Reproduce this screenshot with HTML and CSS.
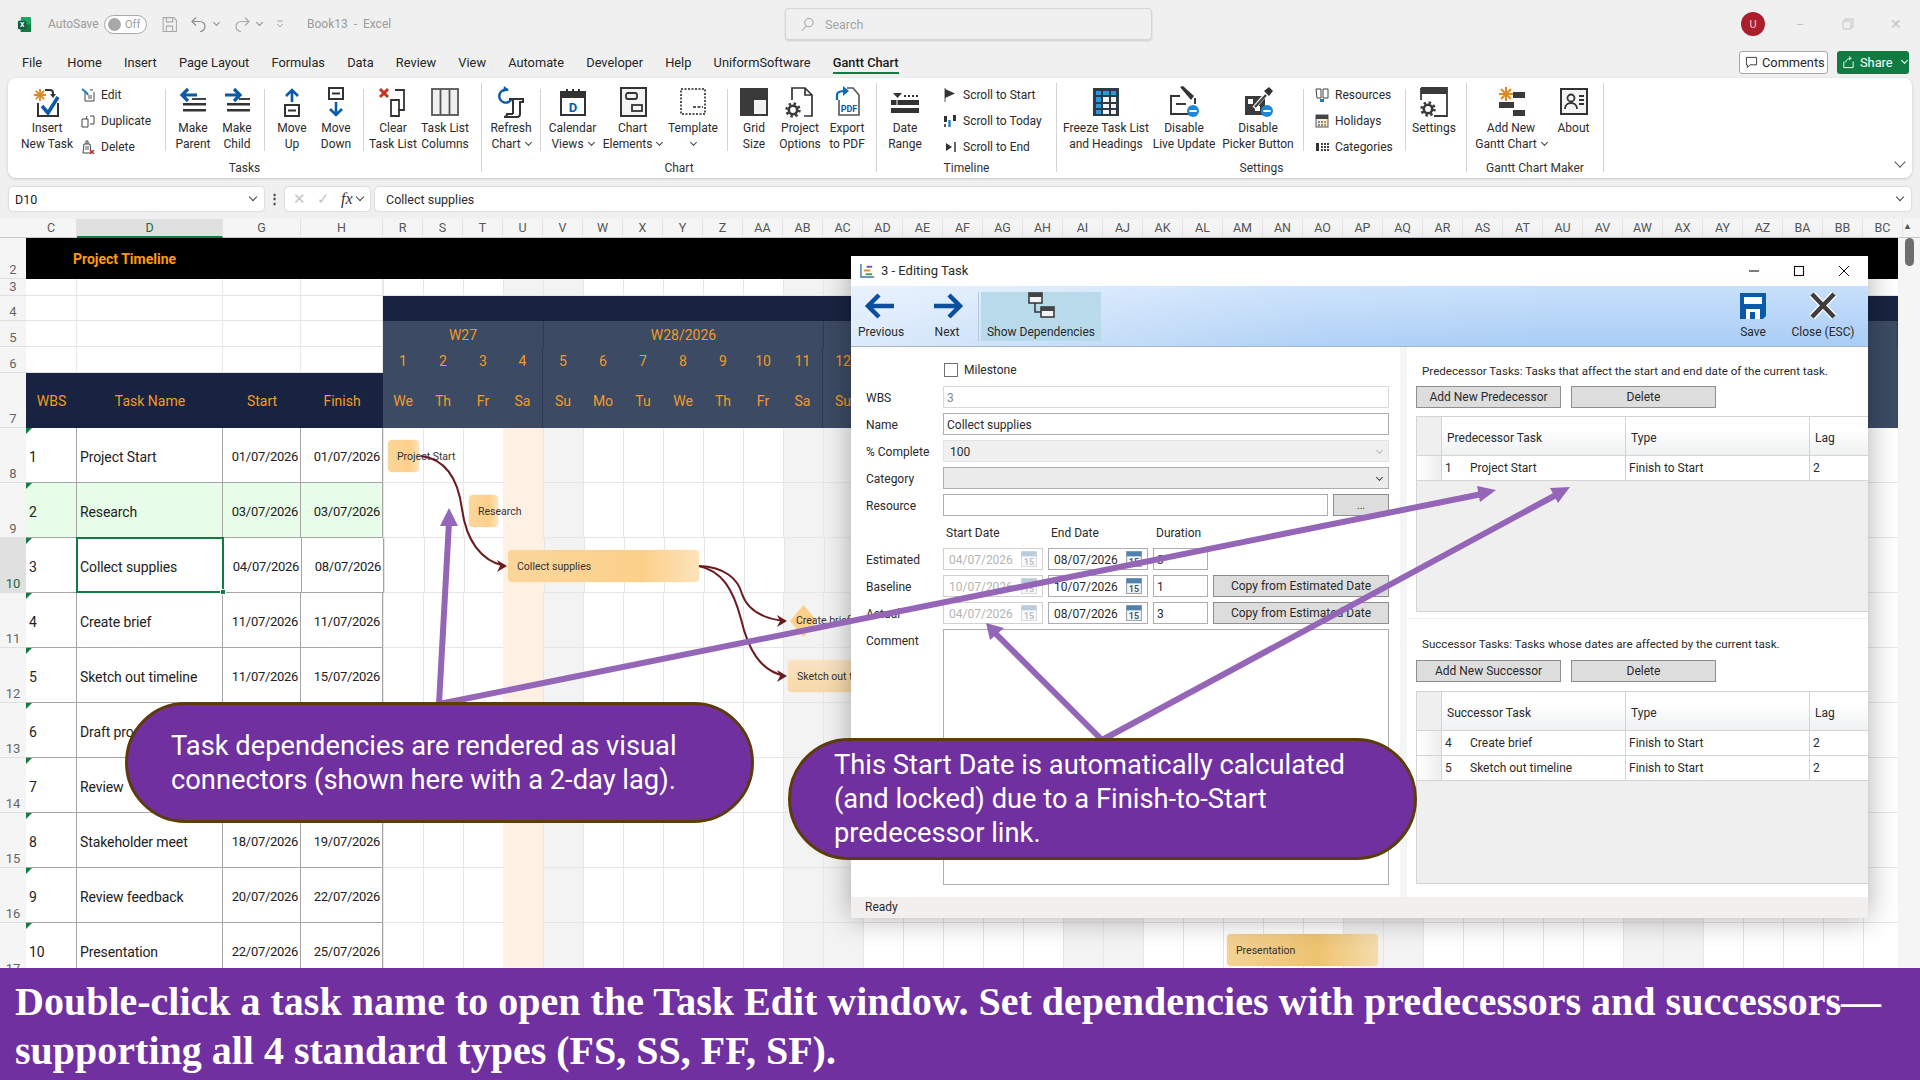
FILE: index.html
```html
<!DOCTYPE html>
<html lang="en">
<head>
<meta charset="utf-8">
<title>Gantt Chart - Editing Task</title>
<link rel="stylesheet" href="styles.css">
</head>
<body>
<svg class="defs" width="0" height="0" aria-hidden="true">
  <defs>
    <g id="gear"><circle cx="8" cy="8" r="4.2" fill="none" stroke="#3a3a3a" stroke-width="2.6"/><circle cx="8" cy="8" r="6.4" fill="none" stroke="#3a3a3a" stroke-width="2.6" stroke-dasharray="2.4 2.6"/></g>
    <g id="cal"><rect x="1.5" y="1.5" width="14" height="14" fill="#f4f6f8" stroke="#9aa3ad"/><rect x="1.5" y="1.5" width="14" height="4.5" fill="#4f81ac"/><text x="8.5" y="14" font-family="Roboto, sans-serif" font-size="8.5" font-weight="700" text-anchor="middle" fill="#4a5a6a">15</text></g>
    <g id="minusdot"><circle cx="0" cy="0" r="6" fill="#1e88d6"/><rect x="-3.6" y="-1" width="7.2" height="2" fill="#fff"/></g>
  </defs>
</svg>
<div class="app">
  <header class="titlebar">
    <div class="qat">
      <svg class="xl" viewBox="0 0 16 18"><rect x="4" y="1" width="11" height="16" rx="1" fill="#21a366"/><rect x="4" y="9" width="11" height="8" fill="#107c41"/><rect x="1" y="5" width="9" height="9" rx="1" fill="#185c37"/><text x="5.5" y="12" font-family="Roboto, sans-serif" font-size="7.5" font-weight="700" text-anchor="middle" fill="#fff">X</text></svg>
      <span class="autosave">AutoSave</span>
      <span class="toggle"><i class="knob"></i><b>Off</b></span>
      <svg class="qi" viewBox="0 0 16 16"><path d="M2 1.5h10l2.5 2.5v10.500h-12.500z M5 1.500v4h6v-4 M5 14.500v-5h6v5" fill="none" stroke="#a8a8a8"/></svg>
      <svg class="qi qi-undo" viewBox="0 0 18 16"><path d="M6 1 2 5l4 4 M2 5h8a5 5 0 0 1 0 10" fill="none" stroke="#8c8c8c" stroke-width="1.200"/></svg>
      <i class="ch ch-q"></i>
      <svg class="qi qi-redo" viewBox="0 0 18 16"><path d="M12 1l4 4-4 4 M16 5H8a5 5 0 0 0 0 10" fill="none" stroke="#a8a8a8" stroke-width="1.200"/></svg>
      <i class="ch ch-q"></i>
      <svg class="qcust" viewBox="0 0 10 10"><path d="M2 2h6M2 5l3 3 3-3" fill="none" stroke="#a8a8a8"/></svg>
      <span class="bookname">Book13 &nbsp;-&nbsp; Excel</span>
    </div>
    <div class="search"><svg class="si" viewBox="0 0 16 16"><circle cx="9.500" cy="6" r="4.500" fill="none" stroke="#9a9a9a"/><path d="M6.500 9.500 2 15" stroke="#9a9a9a" fill="none"/></svg><span>Search</span></div>
    <div class="winctl">
      <span class="avatar">U</span>
      <span class="wc">–</span>
      <svg class="wcs" viewBox="0 0 12 12"><path d="M3 3V1h8v8H9M1 3h8v8H1z" fill="none" stroke="#c4c4c4"/></svg>
      <span class="wc wc-x">✕</span>
    </div>
  </header>

  <nav class="tabs">
    <span class="tab tab-first">File</span><span class="tab">Home</span><span class="tab">Insert</span><span class="tab">Page Layout</span><span class="tab">Formulas</span><span class="tab">Data</span><span class="tab">Review</span><span class="tab">View</span><span class="tab">Automate</span><span class="tab">Developer</span><span class="tab">Help</span><span class="tab">UniformSoftware</span><span class="tab tab-on">Gantt Chart</span>
    <span class="tab-actions">
      <span class="comments"><svg class="ci" viewBox="0 0 14 14"><path d="M1.500 1.500h11v8h-7l-3 3v-3h-1z" fill="none" stroke="#333"/></svg>Comments</span>
      <span class="share"><svg class="ci" viewBox="0 0 14 14"><path d="M2 6v6.500h10V6M4 7c0-3 3-4.500 5-4.500M7.500 0.500 10 2.500 7.500 4.500" fill="none" stroke="#fff"/></svg>Share<i class="ch ch-share"></i></span>
    </span>
  </nav>

  <section class="ribbon">
    <div class="grp g-tasks">
      <div class="rb-row">
        <div class="rb w50"><svg class="ic" viewBox="0 0 32 32"><path d="M9 3v12M3 9h12M4.800 4.800l8.400 8.400M13.200 4.800l-8.400 8.400" stroke="#e08a1e" stroke-width="1.800"/><path d="M14 4h5a3 3 0 0 1 3 3v3" fill="none" stroke="#333" stroke-width="2"/><path d="M19 8l3 4 3-4z" fill="#333"/><path d="M7 17v13h20V17" fill="none" stroke="#333" stroke-width="2"/><path d="M11 20l6 7 10-16" fill="none" stroke="#0a5aa8" stroke-width="3.600"/></svg><span class="lb">Insert<br>New Task</span></div>
        <div class="smcol w93">
          <div class="sm"><svg class="ics" viewBox="0 0 14 14"><path d="M4 3v10h9V4M9 2h3" fill="none" stroke="#444"/><path d="M1 1l5 4M5 4l2 3" stroke="#1c7fc4" stroke-width="2"/><path d="M7 8h4M7 10h4" stroke="#555"/></svg><span>Edit</span></div>
          <div class="sm"><svg class="ics" viewBox="0 0 14 14"><path d="M1 5h6v8H1zM5 5l1-3M10 2h3v8h-3" fill="none" stroke="#444"/><path d="M9 2h1M9 10h1" stroke="#444"/></svg><span>Duplicate</span></div>
          <div class="sm"><svg class="ics" viewBox="0 0 14 14"><path d="M3 4h6l1 9H2zM5 4V1h2v3" fill="none" stroke="#444"/><path d="M4 7h4M4 9h4" stroke="#555"/><path d="M9 10l4 4M13 10l-4 4" stroke="#c8321c" stroke-width="1.500"/></svg><span>Delete</span></div>
        </div>
        <i class="sep"></i>
        <div class="seg">
          <div class="rb w44"><svg class="ic" viewBox="0 0 32 32"><path d="M20 9H6M11 3 5 9l6 6" fill="none" stroke="#0a5aa8" stroke-width="3.200"/><path d="M15 12h14v2H15z" fill="#444"/><path d="M6 17h23v2.500H6zM6 23h23v2.500H6z" fill="#333"/></svg><span class="lb">Make<br>Parent</span></div>
          <div class="rb w44"><svg class="ic" viewBox="0 0 32 32"><path d="M4 9h14M13 3l6 6-6 6" fill="none" stroke="#0a5aa8" stroke-width="3.200"/><path d="M18 12h11v2H18z" fill="#444"/><path d="M6 17h23v2.500H6zM6 23h23v2.500H6z" fill="#333"/></svg><span class="lb">Make<br>Child</span></div>
        </div>
        <i class="sep"></i>
        <div class="seg">
          <div class="rb w44"><svg class="ic" viewBox="0 0 32 32"><path d="M16 16V4M10 10l6-6 6 6" fill="none" stroke="#0a5aa8" stroke-width="2.600"/><rect x="9" y="19" width="14" height="11" fill="none" stroke="#333" stroke-width="2"/><rect x="12" y="23.500" width="8" height="2" fill="#333"/></svg><span class="lb">Move<br>Up</span></div>
          <div class="rb w44"><svg class="ic" viewBox="0 0 32 32"><rect x="9" y="2" width="14" height="11" fill="none" stroke="#333" stroke-width="2"/><rect x="12" y="6.500" width="8" height="2" fill="#333"/><path d="M16 16v13M10 23l6 6 6-6" fill="none" stroke="#0a5aa8" stroke-width="2.600"/></svg><span class="lb">Move<br>Down</span></div>
        </div>
        <i class="sep"></i>
        <div class="seg seg-last">
          <div class="rb w48"><svg class="ic" viewBox="0 0 32 32"><path d="M3 3l8 8M11 3l-8 8" stroke="#c8321c" stroke-width="3"/><path d="M18 4h9v20h-6M14 14h8v16h-8z" fill="none" stroke="#333" stroke-width="1.800"/></svg><span class="lb">Clear<br>Task List</span></div>
          <div class="rb w56"><svg class="ic" viewBox="0 0 32 32"><rect x="3" y="3" width="26" height="26" fill="#f0f0f0" stroke="#555" stroke-width="1.800"/><path d="M11.500 3v26M20.500 3v26" stroke="#555" stroke-width="1.800"/></svg><span class="lb">Task List<br>Columns</span></div>
        </div>
      </div>
      <div class="rb-label">Tasks</div>
    </div>

    <div class="grp g-chart">
      <div class="rb-row">
        <div class="rb w58"><svg class="ic" viewBox="0 0 32 32"><path d="M13 4a6.500 6.500 0 1 0 4 8" fill="none" stroke="#0a5aa8" stroke-width="2.400"/><path d="M9 0l5 4-6 2z" fill="#0a5aa8"/><path d="M14 13h14v3h-3v12c0 2-1 3-3 3H9c3 0 3-2 3-3h6" fill="none" stroke="#333" stroke-width="2"/><path d="M18 14v14" stroke="#333" stroke-width="2"/></svg><span class="lb">Refresh<br>Chart <i class="ch"></i></span></div>
        <i class="sep"></i>
        <div class="rb w63"><svg class="ic" viewBox="0 0 32 32"><rect x="4" y="6" width="24" height="23" fill="none" stroke="#333" stroke-width="2"/><path d="M4 7h24v5H4z" fill="#333"/><path d="M10 3v5M16 3v5M22 3v5" stroke="#333" stroke-width="2"/><text x="16" y="26" font-family="Roboto, sans-serif" font-size="13" font-weight="700" text-anchor="middle" fill="#0a5aa8">D</text></svg><span class="lb">Calendar<br>Views <i class="ch"></i></span></div>
        <div class="rb w57"><svg class="ic" viewBox="0 0 32 32"><rect x="4" y="2" width="25" height="28" fill="#f4f4f4" stroke="#333" stroke-width="2"/><rect x="9" y="7" width="11" height="6" rx="2" fill="none" stroke="#333" stroke-width="1.800"/><rect x="15" y="19" width="10" height="6" fill="none" stroke="#333" stroke-width="1.800"/></svg><span class="lb">Chart<br>Elements <i class="ch"></i></span></div>
        <div class="rb w64"><svg class="ic" viewBox="0 0 32 32"><rect x="4" y="3" width="24" height="25" fill="none" stroke="#555" stroke-width="2" stroke-dasharray="2 1.500"/><path d="M16 21h10" stroke="#555" stroke-width="2" stroke-dasharray="3 1.500"/></svg><span class="lb">Template<br><i class="ch"></i></span></div>
        <i class="sep sep-m"></i>
        <div class="rb w52"><svg class="ic" viewBox="0 0 32 32"><rect x="3" y="3" width="26" height="26" fill="#f2f2f2" stroke="#3a3a3a" stroke-width="2"/><path d="M3 3h26v11H3zM3 14h13v15H3z" fill="#3a3a3a"/></svg><span class="lb">Grid<br>Size</span></div>
        <div class="rb w40"><svg class="ic" viewBox="0 0 32 32"><path d="M8 14V2h13l7 7v21H20M21 2v7h7" fill="none" stroke="#333" stroke-width="1.700"/><use href="#gear" transform="translate(1 16)"/></svg><span class="lb">Project<br>Options</span></div>
        <div class="rb w54"><svg class="ic" viewBox="0 0 32 32"><path d="M8 14v15h20V9l-6-7h-6" fill="none" stroke="#555" stroke-width="1.600"/><path d="M6 14V9c0-3 3-4 8-4" fill="none" stroke="#0a6bb8" stroke-width="2.200"/><path d="M12 0l6 5-6 5z" fill="#0a6bb8"/><text x="18" y="26" font-family="Roboto, sans-serif" font-size="9" font-weight="700" text-anchor="middle" fill="#0a5aa8">PDF</text></svg><span class="lb">Export<br>to PDF</span></div>
      </div>
      <div class="rb-label">Chart</div>
    </div>

    <div class="grp g-time">
      <div class="rb-row">
        <div class="rb w56"><svg class="ic" viewBox="0 0 32 32"><path d="M4 7h9l-4.500 5z" fill="#333"/><path d="M15 10h14" stroke="#333" stroke-width="2" stroke-dasharray="2 2"/><path d="M2 14h28v5H2zM2 22h28v5H2z" fill="#333"/><path d="M8 14v5" stroke="#fff"/></svg><span class="lb">Date<br>Range</span></div>
        <div class="smcol w123">
          <div class="sm"><svg class="ics" viewBox="0 0 14 14"><path d="M2 0v14" stroke="#555"/><path d="M2 1l10 4.500L2 10z" fill="#333"/></svg><span>Scroll to Start</span></div>
          <div class="sm"><svg class="ics" viewBox="0 0 14 14"><path d="M1 2h3v6H1zM10 1h3v6h-3z" fill="#333"/><path d="M6.500 6v7" stroke="#1c7fc4" stroke-width="2.400"/><path d="M2 10v3" stroke="#555" stroke-width="2"/></svg><span>Scroll to Today</span></div>
          <div class="sm"><svg class="ics" viewBox="0 0 14 14"><path d="M3 3l6 4-6 4z" fill="#333"/><path d="M12 2v10" stroke="#333" stroke-width="1.500"/></svg><span>Scroll to End</span></div>
        </div>
      </div>
      <div class="rb-label">Timeline</div>
    </div>

    <div class="grp g-set">
      <div class="rb-row">
        <div class="rb w98"><svg class="ic" viewBox="0 0 32 32"><rect x="3" y="2" width="26" height="28" fill="#2e3a46"/><path d="M6 5h5v4H6zM13 5h6v4h-6zM21 5h5v4h-5zM6 11h5v5H6zM6 18h5v4H6zM6 24h5v4H6z" fill="#2a9ae0"/><path d="M13 11h6v5h-6zM21 11h5v5h-5zM13 18h6v4h-6zM21 18h5v4h-5zM13 24h6v4h-6zM21 24h5v4h-5z" fill="#f4f4f4"/></svg><span class="lb">Freeze Task List<br>and Headings</span></div>
        <div class="rb w58"><svg class="ic" viewBox="0 0 32 32"><path d="M12 10H3v18h20v-3M27 12v6" fill="none" stroke="#333" stroke-width="1.900"/><path d="M8 18h10" stroke="#333" stroke-width="1.900"/><path d="M12 1l3-1 11 10-3 4z" fill="#333"/><use href="#minusdot" transform="translate(25 25)"/></svg><span class="lb">Disable<br>Live Update</span></div>
        <div class="rb w90"><svg class="ic" viewBox="0 0 32 32"><rect x="3" y="10" width="20" height="19" fill="#3a3a3a"/><path d="M6 13h5v5H6zM13 20h5v5h-5z" fill="#fff"/><path d="M12 22 24 8" stroke="#fff" stroke-width="4"/><path d="M13 21l11-12" stroke="#444" stroke-width="2.400"/><path d="M22 5l5-4 4 4-4 5z" fill="#333"/><use href="#minusdot" transform="translate(25 25)"/></svg><span class="lb">Disable<br>Picker Button</span></div>
        <i class="sep"></i>
        <div class="smcol w101 smcol-r">
          <div class="sm"><svg class="ics" viewBox="0 0 14 14"><path d="M1 1h5v9H2zM8 1h5v9H8z" fill="#fff" stroke="#444"/><rect x="5" y="11" width="4" height="3" fill="#1c7fc4"/></svg><span>Resources</span></div>
          <div class="sm"><svg class="ics" viewBox="0 0 14 14"><rect x="1" y="1" width="12" height="12" fill="#f3efe2" stroke="#555"/><path d="M1 1h12v4H1z" fill="#444"/><path d="M3 7h2v2H3zM6 7h2v2H6zM3 10h2v2H3zM6 10h2v2H6z" fill="#888"/><path d="M9 7h2v2H9zM9 10h2v2H9z" fill="#d48a2c"/></svg><span>Holidays</span></div>
          <div class="sm"><svg class="ics" viewBox="0 0 14 14"><path d="M1 3h3v8H1z" fill="#333"/><path d="M6 3h2v2H6zM9 3h2v2H9zM12 3h2v2h-2zM6 6h2v2H6zM9 6h2v2H9zM12 6h2v2h-2zM6 9h2v2H6zM9 9h2v2H9zM12 9h2v2h-2z" fill="#444"/></svg><span>Categories</span></div>
        </div>
        <i class="sep"></i>
        <div class="rb w56 rb-gapr"><svg class="ic" viewBox="0 0 32 32"><path d="M3 2h26v28H16M3 2v12" fill="none" stroke="#3a3a3a" stroke-width="1.800"/><path d="M3 2h26v6H3z" fill="#3a3a3a"/><use href="#gear" transform="translate(2 15)"/></svg><span class="lb">Settings</span></div>
      </div>
      <div class="rb-label">Settings</div>
    </div>

    <div class="grp g-make">
      <div class="rb-row">
        <div class="rb w88"><svg class="ic" viewBox="0 0 32 32"><path d="M11 1v14M4 8h14M6 3l10 10M16 3 6 13" stroke="#e08a1e" stroke-width="2"/><path d="M18 6h12v6H18zM4 16h15v6H4zM18 24h12v6H18z" fill="#3a3a3a"/></svg><span class="lb">Add New<br>Gantt Chart <i class="ch"></i></span></div>
        <div class="rb w37"><svg class="ic" viewBox="0 0 32 32"><rect x="3" y="3" width="26" height="25" fill="#f4f4f4" stroke="#333" stroke-width="2"/><circle cx="13" cy="12" r="3.500" fill="none" stroke="#333" stroke-width="1.800"/><path d="M7 23c0-8 12-8 12 0M21 10h5M21 14h5M21 18h5" fill="none" stroke="#333" stroke-width="1.800"/></svg><span class="lb">About</span></div>
      </div>
      <div class="rb-label">Gantt Chart Maker</div>
    </div>
    <i class="ch ch-collapse"></i>
  </section>

  <div class="fbar">
    <div class="namebox"><span>D10</span><i class="ch ch-f"></i></div>
    <span class="fdots">⋮</span>
    <div class="fnbox"><span class="fx-x">✕</span><span class="fx-c">✓</span><em>fx</em><i class="ch ch-f"></i></div>
    <div class="finput"><span>Collect supplies</span><i class="ch ch-f"></i></div>
  </div>

  <div class="colhead">
    <span class="corner"></span>
    <span class="hc cC">C</span><span class="hc cD">D</span><span class="hc cG">G</span><span class="hc cH">H</span>
    <span class="hc">R</span><span class="hc">S</span><span class="hc">T</span><span class="hc">U</span><span class="hc">V</span><span class="hc">W</span><span class="hc">X</span><span class="hc">Y</span><span class="hc">Z</span><span class="hc">AA</span><span class="hc">AB</span><span class="hc">AC</span><span class="hc">AD</span><span class="hc">AE</span><span class="hc">AF</span><span class="hc">AG</span><span class="hc">AH</span><span class="hc">AI</span><span class="hc">AJ</span><span class="hc">AK</span><span class="hc">AL</span><span class="hc">AM</span><span class="hc">AN</span><span class="hc">AO</span><span class="hc">AP</span><span class="hc">AQ</span><span class="hc">AR</span><span class="hc">AS</span><span class="hc">AT</span><span class="hc">AU</span><span class="hc">AV</span><span class="hc">AW</span><span class="hc">AX</span><span class="hc">AY</span><span class="hc">AZ</span><span class="hc">BA</span><span class="hc">BB</span><span class="hc">BC</span>
  </div>

  <main class="sheetwrap">
    <div class="sheet">
      <div class="row r2"><span class="rn">2</span><div class="band"><span class="ptitle">Project Timeline</span></div></div>
      <div class="row r3"><span class="rn">3</span><span class="c cC"></span><span class="c cD"></span><span class="c cG"></span><span class="c cH"></span><div class="gc"></div></div>
      <div class="row r4"><span class="rn">4</span><span class="c cC"></span><span class="c cD"></span><span class="c cG"></span><span class="c cH"></span><div class="gc gc-navy"></div></div>
      <div class="row r5"><span class="rn">5</span><span class="c cC"></span><span class="c cD"></span><span class="c cG"></span><span class="c cH"></span><div class="gc gc-slate"><span class="wk wk1">W27</span><span class="wk wk2">W28/2026</span><span class="wk wk3"></span></div></div>
      <div class="row r6"><span class="rn">6</span><span class="c cC"></span><span class="c cD"></span><span class="c cG"></span><span class="c cH"></span><div class="gc gc-slate"><span class="d">1</span><span class="d">2</span><span class="d">3</span><span class="d dw">4</span><span class="d">5</span><span class="d">6</span><span class="d">7</span><span class="d">8</span><span class="d">9</span><span class="d">10</span><span class="d dw">11</span><span class="d">12</span></div></div>
      <div class="row r7"><span class="rn">7</span><span class="th cC">WBS</span><span class="th cD">Task Name</span><span class="th cG">Start</span><span class="th cH">Finish</span><div class="gc gc-slate"><span class="d">We</span><span class="d">Th</span><span class="d">Fr</span><span class="d dw">Sa</span><span class="d">Su</span><span class="d">Mo</span><span class="d">Tu</span><span class="d">We</span><span class="d">Th</span><span class="d">Fr</span><span class="d dw">Sa</span><span class="d">Su</span></div></div>

      <div class="row rt"><span class="rn">8</span><span class="td cC">1</span><span class="td cD">Project Start</span><span class="td cG dt">01/07/2026</span><span class="td cH dt">01/07/2026</span><div class="gc"></div></div>
      <div class="row rt rt-green"><span class="rn">9</span><span class="td cC">2</span><span class="td cD">Research</span><span class="td cG dt">03/07/2026</span><span class="td cH dt">03/07/2026</span><div class="gc"></div></div>
      <div class="row rt"><span class="rn rn-sel">10</span><span class="td cC">3</span><span class="td cD td-sel">Collect supplies<i class="handle"></i></span><span class="td cG dt">04/07/2026</span><span class="td cH dt">08/07/2026</span><div class="gc"></div></div>
      <div class="row rt"><span class="rn">11</span><span class="td cC">4</span><span class="td cD">Create brief</span><span class="td cG dt">11/07/2026</span><span class="td cH dt">11/07/2026</span><div class="gc"></div></div>
      <div class="row rt"><span class="rn">12</span><span class="td cC">5</span><span class="td cD">Sketch out timeline</span><span class="td cG dt">11/07/2026</span><span class="td cH dt">15/07/2026</span><div class="gc"></div></div>
      <div class="row rt"><span class="rn">13</span><span class="td cC">6</span><span class="td cD">Draft proposal</span><span class="td cG dt">15/07/2026</span><span class="td cH dt">16/07/2026</span><div class="gc"></div></div>
      <div class="row rt"><span class="rn">14</span><span class="td cC">7</span><span class="td cD">Review</span><span class="td cG dt">16/07/2026</span><span class="td cH dt">18/07/2026</span><div class="gc"></div></div>
      <div class="row rt"><span class="rn">15</span><span class="td cC">8</span><span class="td cD">Stakeholder meet</span><span class="td cG dt">18/07/2026</span><span class="td cH dt">19/07/2026</span><div class="gc"></div></div>
      <div class="row rt"><span class="rn">16</span><span class="td cC">9</span><span class="td cD">Review feedback</span><span class="td cG dt">20/07/2026</span><span class="td cH dt">22/07/2026</span><div class="gc"></div></div>
      <div class="row rt"><span class="rn">17</span><span class="td cC">10</span><span class="td cD">Presentation</span><span class="td cG dt">22/07/2026</span><span class="td cH dt">25/07/2026</span><div class="gc"></div></div>

      <i class="today"></i>
      <div class="bar b1">Project Start</div>
      <div class="bar b2">Research</div>
      <div class="bar b3">Collect supplies</div>
      <div class="diamond"></div><span class="barlabel b4">Create brief</span>
      <div class="bar b5">Sketch out timeline</div>
      <div class="bar b6">Presentation</div>
      <svg class="links" viewBox="0 239 1898 730">
        <g fill="none" stroke="#6d1a1f" stroke-width="2">
          <path d="M421 457C445 460 458 480 462 510C466 540 480 562 505 567"/>
          <path d="M699 567C725 568 738 580 742 595C748 612 765 620 785 622"/>
          <path d="M699 567C722 572 733 590 741 620C748 650 760 672 785 677"/>
        </g>
        <g fill="#6d1a1f"><path d="M507 567l-10-6 3 6-3 6z"/><path d="M787 622l-10-6 3 6-3 6z"/><path d="M787 677l-10-6 3 6-3 6z"/></g>
      </svg>
    </div>
    <div class="vscroll"><span class="upa">▲</span><i class="thumb"></i></div>
  </main>

  <footer class="banner">Double-click a task name to open the Task Edit window. Set dependencies with predecessors and successors—<br>supporting all 4 standard types (FS, SS, FF, SF).</footer>

  <div class="dialog">
    <div class="dtitle">
      <svg class="dti" viewBox="0 0 16 16"><path d="M1 1v14h14" fill="none" stroke="#3b78b5" stroke-width="1.500"/><path d="M7 3h6v2H7z" fill="#7a4ea0"/><path d="M4 7h7v2H4z" fill="#e08a1e"/><path d="M6 11h7v2H6z" fill="#4c9a3c"/></svg>
      <span>3 - Editing Task</span>
      <span class="dctl">
        <svg class="dc" viewBox="0 0 12 12"><path d="M1 6h10" stroke="#111" stroke-width="1.100"/></svg>
        <svg class="dc" viewBox="0 0 12 12"><rect x="1.500" y="1.500" width="9" height="9" fill="none" stroke="#111" stroke-width="1.100"/></svg>
        <svg class="dc" viewBox="0 0 12 12"><path d="M1 1l10 10M11 1 1 11" stroke="#111" stroke-width="1"/></svg>
      </span>
    </div>
    <div class="dbar">
      <div class="tb tb-prev"><svg class="tbi" viewBox="0 0 34 28"><path d="M30 14H5M15 3 4 14l11 11" fill="none" stroke="#0b4f9e" stroke-width="4.500"/></svg><span>Previous</span></div>
      <div class="tb tb-next"><svg class="tbi" viewBox="0 0 34 28"><path d="M4 14h25M19 3l11 11-11 11" fill="none" stroke="#0b4f9e" stroke-width="4.500"/></svg><span>Next</span></div>
      <i class="tbsep"></i>
      <div class="tb tb-dep"><svg class="tbi" viewBox="0 0 34 28"><rect x="5" y="1" width="13" height="10" fill="#f3f3f3" stroke="#333" stroke-width="1.500"/><rect x="5" y="1" width="13" height="4" fill="#444"/><rect x="17" y="15" width="13" height="10" fill="#f3f3f3" stroke="#333" stroke-width="1.500"/><rect x="17" y="15" width="13" height="4" fill="#444"/><path d="M11 11v9h6" fill="none" stroke="#333" stroke-width="1.500"/></svg><span>Show Dependencies</span></div>
      <div class="tb tb-save"><svg class="tbi" viewBox="0 0 34 28"><path d="M4 1h26v23l-3 3H4z" fill="#0b5aa8"/><rect x="8" y="5" width="18" height="7" fill="#fff"/><rect x="10" y="17" width="14" height="10" fill="#fff"/><rect x="14" y="20" width="5" height="7" fill="#0b5aa8"/></svg><span>Save</span></div>
      <div class="tb tb-close"><svg class="tbi" viewBox="0 0 34 28"><path d="M6 2l22 23M28 2 6 25" stroke="#fff" stroke-width="7"/><path d="M6 2l22 23M28 2 6 25" stroke="#3e3e3e" stroke-width="4.500"/></svg><span>Close (ESC)</span></div>
    </div>
    <div class="dbody">
      <div class="form">
        <span></span><label class="ms f-span"><i class="cb"></i>Milestone</label>
        <span class="fl">WBS</span><div class="inp inp-dis f-span">3</div>
        <span class="fl">Name</span><div class="inp f-span">Collect supplies</div>
        <span class="fl">% Complete</span><div class="inp inp-sel f-span">100<i class="ch dd dd-dis"></i></div>
        <span class="fl">Category</span><div class="inp inp-sel inp-dark f-span"><i class="ch dd"></i></div>
        <span class="fl">Resource</span><div class="resrow f-span"><div class="inp inp-grow"></div><span class="btn btn-res">...</span></div>
        <span></span><span class="colt">Start Date</span><span class="colt">End Date</span><span class="colt f-span2">Duration</span>
        <span class="fl">Estimated</span><div class="inp inp-date inp-lock">04/07/2026<svg class="cal cal-dis" viewBox="0 0 17 17"><use href="#cal"/></svg></div><div class="inp inp-date">08/07/2026<svg class="cal" viewBox="0 0 17 17"><use href="#cal"/></svg></div><div class="inp">3</div><span></span>
        <span class="fl">Baseline</span><div class="inp inp-date inp-lock">10/07/2026<svg class="cal cal-dis" viewBox="0 0 17 17"><use href="#cal"/></svg></div><div class="inp inp-date">10/07/2026<svg class="cal" viewBox="0 0 17 17"><use href="#cal"/></svg></div><div class="inp">1</div><span class="btn">Copy from Estimated Date</span>
        <span class="fl">Actual</span><div class="inp inp-date inp-lock">04/07/2026<svg class="cal cal-dis" viewBox="0 0 17 17"><use href="#cal"/></svg></div><div class="inp inp-date">08/07/2026<svg class="cal" viewBox="0 0 17 17"><use href="#cal"/></svg></div><div class="inp">3</div><span class="btn">Copy from Estimated Date</span>
        <span class="fl fl-top">Comment</span><div class="inp inp-area f-span"></div>
      </div>
      <div class="dright">
        <section class="dep dep-a">
          <p class="dep-t">Predecessor Tasks: Tasks that affect the start and end date of the current task.</p>
          <div class="dep-btns"><span class="btn btn-dep">Add New Predecessor</span><span class="btn btn-dep">Delete</span></div>
          <div class="dg dg-a">
            <div class="dg-row dg-head"><span class="ind"></span><span>Predecessor Task</span><span>Type</span><span>Lag</span></div>
            <div class="dg-row"><span class="ind"></span><span class="ct"><b class="nm">1</b>Project Start</span><span>Finish to Start</span><span>2</span></div>
          </div>
        </section>
        <section class="dep dep-b">
          <p class="dep-t">Successor Tasks: Tasks whose dates are affected by the current task.</p>
          <div class="dep-btns"><span class="btn btn-dep">Add New Successor</span><span class="btn btn-dep">Delete</span></div>
          <div class="dg dg-b">
            <div class="dg-row dg-head"><span class="ind"></span><span>Successor Task</span><span>Type</span><span>Lag</span></div>
            <div class="dg-row"><span class="ind"></span><span class="ct"><b class="nm">4</b>Create brief</span><span>Finish to Start</span><span>2</span></div>
            <div class="dg-row"><span class="ind"></span><span class="ct"><b class="nm">5</b>Sketch out timeline</span><span>Finish to Start</span><span>2</span></div>
          </div>
        </section>
      </div>
    </div>
    <div class="dstatus">Ready</div>
  </div>

  <svg class="arrows" viewBox="0 0 1920 1080">
    <g stroke="#9566b8" stroke-width="6" fill="none">
      <path d="M439 704 449 522"/>
      <path d="M439 704 1482 494"/>
      <path d="M1102 740 1556 495"/>
      <path d="M1102 740 994 632"/>
    </g>
    <g fill="#9566b8">
      <path d="M449 508l-9 18h18z"/>
      <path d="M1496 490l-19-4 3 16z"/>
      <path d="M1570 487l-20 1 8 15z"/>
      <path d="M986 623l18 5-14 12z"/>
    </g>
  </svg>

  <div class="callout co1">Task dependencies are rendered as visual<br>connectors (shown here with a 2-day lag).</div>
  <div class="callout co2">This Start Date is automatically calculated<br>(and locked) due to a Finish-to-Start<br>predecessor link.</div>
</div>
</body>
</html>
```

FILE: styles.css
```css
* { box-sizing: border-box; }
html, body { margin: 0; padding: 0; }
body { width: 1920px; height: 1080px; overflow: hidden; background: #f0f0f0; font-family: Roboto, "Liberation Sans", sans-serif; color: #222; }
i, em { font-style: normal; }
.defs { position: absolute; }
.app { position: relative; width: 1920px; height: 1080px; display: flex; flex-direction: column; overflow: hidden; }

/* chevron shared by every dropdown */
.ch { display: inline-block; width: 5px; height: 5px; border-right: 1px solid #444; border-bottom: 1px solid #444; transform: rotate(45deg); position: relative; top: -3px; margin-left: 2px; flex: none; }
.ch-q { border-color: #8c8c8c; margin-left: 6px; top: -2px; }
.ch-share { border-color: #fff; margin-left: 4px; top: -2px; }
.ch-f { width: 6px; height: 6px; top: -2px; }
.ch-collapse { position: absolute; right: 8px; top: 80px; width: 8px; height: 8px; border-color: #555; }

/* title bar */
.titlebar { height: 48px; display: flex; align-items: center; position: relative; flex: none; font-size: 12px; }
.qat { display: flex; align-items: center; padding-left: 17px; color: #9b9b9b; }
.xl { width: 15px; height: 17px; margin-right: 16px; }
.autosave { width: 56px; }
.toggle { width: 43px; height: 19px; border: 1px solid #a8a8a8; border-radius: 10px; display: flex; align-items: center; background: #fff; font-size: 11px; padding: 0 5px 0 3px; gap: 4px; }
.knob { width: 13px; height: 13px; border-radius: 50%; background: #a8a8a8; }
.toggle b { font-weight: 400; }
.qi { width: 17px; height: 17px; margin-left: 14px; }
.qi-undo { margin-left: 12px; width: 18px; }
.qi-redo { margin-left: 14px; width: 18px; }
.qcust { width: 10px; height: 10px; margin-left: 13px; }
.bookname { margin-left: 22px; }
.search { position: absolute; left: 785px; top: 8px; width: 367px; height: 32px; border: 1px solid #d6d6d6; border-radius: 4px; background: #f0f0f0; box-shadow: 0 1px 2px rgba(0,0,0,.15); display: flex; align-items: center; gap: 10px; padding-left: 14px; color: #a5a5a5; font-size: 12.500px; }
.si { width: 15px; height: 15px; }
.winctl { position: absolute; right: 16px; top: 12px; display: flex; align-items: center; color: #c4c4c4; }
.avatar { width: 24px; height: 24px; border-radius: 50%; background: #ab1f2d; color: #e9c9cb; font-size: 11px; display: flex; align-items: center; justify-content: center; margin-right: 27px; }
.wc { width: 16px; text-align: center; font-size: 13px; }
.wcs { width: 12px; height: 12px; margin: 0 34px; }
.wc-x { font-size: 14px; }

/* tabs */
.tabs { height: 30px; flex: none; display: flex; align-items: flex-start; padding-left: 22px; gap: 22.200px; font-size: 12.800px; color: #262626; position: relative; }
.tab { height: 26px; line-height: 30px; white-space: nowrap; }
.tab-first { margin-right: 3px; }
.tab-on { border-bottom: 2px solid #107c41; font-weight: 500; color: #1a1a1a; }
.tab-actions { position: absolute; left: 1739px; top: 3px; display: flex; gap: 9px; }
.comments, .share { height: 23px; border-radius: 3px; display: flex; align-items: center; font-size: 12.800px; }
.comments { width: 89px; background: #fff; border: 1px solid #a8a8a8; padding-left: 5px; gap: 4px; }
.share { width: 72px; background: #107c41; color: #fff; padding-left: 5px; gap: 5px; }
.ci { width: 13px; height: 13px; }

/* ribbon */
.ribbon { height: 100px; margin: 0 8px; flex: none; background: #fff; border-radius: 8px; box-shadow: 0 1px 3px rgba(0,0,0,.18); display: flex; position: relative; padding-top: 5px; }
.grp { display: flex; flex-direction: column; height: 89px; border-right: 1px solid #d4d4d4; }
.g-tasks { width: 474px; padding-left: 14px; }
.g-chart { width: 395px; }
.g-time { width: 180px; }
.g-set { width: 410px; }
.g-make { width: 137px; border-right: 1px solid #d4d4d4; }
.rb-row { display: flex; height: 78px; flex: none; padding-top: 1px; }
.rb-label { font-size: 12px; text-align: center; color: #333; line-height: 14px; margin-left: -14px; }
.g-chart .rb-label, .g-time .rb-label, .g-set .rb-label, .g-make .rb-label { margin-left: 0; }
.rb { display: flex; flex-direction: column; align-items: center; flex: none; font-size: 12px; color: #2b2b2b; }
.ic { width: 32px; height: 32px; margin-top: 2px; margin-bottom: 2px; flex: none; }
.lb { text-align: center; line-height: 16px; white-space: nowrap; }
.w37 { width: 37px; } .w40 { width: 40px; } .w44 { width: 44px; } .w48 { width: 48px; } .w50 { width: 50px; } .w52 { width: 52px; } .w54 { width: 54px; } .w56 { width: 56px; } .w57 { width: 57px; } .w58 { width: 58px; } .w63 { width: 63px; } .w64 { width: 64px; } .w88 { width: 88px; } .w90 { width: 90px; } .w93 { width: 93px; } .w98 { width: 98px; } .w101 { width: 101px; } .w123 { width: 123px; }
.rb-gapr { margin-right: 5px; }
.sep { width: 1px; height: 62px; background: #d4d4d4; flex: none; margin-top: 5px; }
.sep-m { margin-left: 2px; }
.seg { display: flex; padding: 0 5px; }
.seg-last { padding-right: 0; }
.smcol { display: flex; flex-direction: column; padding-left: 9px; flex: none; margin-top: -2px; }
.g-time .smcol { padding-left: 10px; }
.smcol-r { padding-left: 11px; }
.sm { height: 26px; flex: none; display: flex; align-items: center; gap: 6px; font-size: 12px; color: #2b2b2b; white-space: nowrap; }
.ics { width: 14px; height: 14px; flex: none; }

/* formula bar */
.fbar { height: 24px; margin: 9px 9px 0; flex: none; display: flex; font-size: 12.500px; }
.namebox, .fnbox, .finput { background: #fff; border-radius: 4px; box-shadow: 0 0 2px rgba(0,0,0,.25); display: flex; align-items: center; }
.namebox { width: 255px; padding: 0 8px 0 6px; justify-content: space-between; }
.fdots { width: 21px; text-align: center; line-height: 24px; color: #444; font-weight: 700; }
.fnbox { width: 85px; padding-left: 8px; gap: 11px; color: #c4c4c4; font-size: 15px; }
.fnbox em { font-family: "Liberation Serif", serif; font-style: italic; color: #333; font-size: 16px; }
.fnbox .ch { margin-left: -7px; }
.finput { flex: 1; margin-left: 5px; padding: 0 8px 0 11px; justify-content: space-between; color: #2b2b2b; }

/* column heads */
.colhead { height: 19px; margin-top: 8px; flex: none; display: flex; font-size: 12.500px; color: #555; border-bottom: 1px solid #c8c8c8; background: #f5f5f5; }
.corner { width: 26px; flex: none; position: relative; }
.hc { width: 40px; flex: none; text-align: center; line-height: 18px; border-right: 1px solid #e2e2e2; }
.hc.cC, .c.cC, .td.cC, .th.cC { width: 51px; }
.hc.cD, .c.cD, .td.cD, .th.cD { width: 146px; }
.hc.cG, .c.cG, .td.cG, .th.cG { width: 78px; }
.hc.cH, .c.cH, .td.cH, .th.cH { width: 82px; }
.hc.cD { background: #e0e0e0; border-bottom: 2px solid #107c41; height: 19px; color: #1e6b3c; }

/* sheet */
.sheetwrap { height: 730px; flex: none; display: flex; background: #fff; }
.sheet { width: 1898px; position: relative; overflow: hidden; display: flex; flex-direction: column; background: #fff; }
.row { display: flex; flex: none; width: 100%; }
.r2 { height: 41px; } .r3 { height: 17px; } .r4 { height: 25px; } .r5 { height: 26px; } .r6 { height: 26px; } .r7 { height: 55px; } .rt { height: 55px; }
.rn { width: 26px; flex: none; background: #f5f5f5; color: #666; font-size: 13px; display: flex; align-items: flex-end; justify-content: center; line-height: 15px; padding: 0 0 1px; border-bottom: 1px solid #e0e0e0; }
.rn-sel { background: #e0e0e0; color: #1e6b3c; }
.band { flex: 1; background: #000; display: flex; align-items: center; padding-left: 47px; }
.ptitle { color: #ff9a0d; font-size: 14px; font-weight: 700; }
.c { flex: none; border-right: 1px solid #e8e8e8; border-bottom: 1px solid #e3e3e3; }
.gc { flex: 1; display: flex; border-bottom: 1px solid #e6e6e6; background-image: repeating-linear-gradient(90deg, #e6e6e6 0, #e6e6e6 1px, transparent 1px, transparent 40px), repeating-linear-gradient(90deg, #fff 0, #fff 120px, #f3f3f3 120px, #f3f3f3 200px, #fff 200px, #fff 280px); }
.gc-navy { background: #172340; border: 0; }
.gc-slate { background: #3c4a63; border: 0; color: #f39a26; font-size: 14px; }
.wk { display: flex; align-items: center; justify-content: center; height: 100%; border-right: 1px solid #2c3950; padding-top: 2px; }
.wk1 { width: 161px; } .wk2 { width: 280px; } .wk3 { flex: 1; }
.d { width: 40px; flex: none; display: flex; align-items: center; justify-content: center; padding-top: 1px; }
.dw { border-right: 1px solid #2c3950; }
.th { flex: none; background: #172340; color: #f39a26; font-size: 14px; display: flex; align-items: center; justify-content: center; padding-top: 1px; }
.td { flex: none; position: relative; font-size: 14px; letter-spacing: -0.1px; color: #222; display: flex; align-items: center; padding: 3px 0 0 3px; border-right: 1px solid #a6a6a6; border-bottom: 1px solid #a6a6a6; white-space: nowrap; overflow: hidden; }
.td.cC::before { content: ""; position: absolute; left: 0; top: 0; border-top: 6px solid #107c41; border-right: 6px solid transparent; }
.rt-green .td { background: #e8fde9; }
.td.dt { justify-content: flex-end; padding: 3px 2px 0 0; font-size: 13px; letter-spacing: -0.3px; }
.td-sel { overflow: visible; border: 2px solid #107c41; margin: -1px 0 0 -1px; width: 148px !important; padding-left: 2px; z-index: 2; background: #fff; height: 56px; }
.handle { position: absolute; right: -4px; bottom: -4px; background: #107c41; border: 1px solid #fff; box-sizing: content-box; width: 4px; height: 4px; }
.today { position: absolute; left: 503px; top: 190px; width: 40px; bottom: 0; background: #fff0e4; }
.bar { position: absolute; height: 32px; border-radius: 4px; font-size: 10.500px; color: #333; padding-left: 9px; line-height: 33px; white-space: nowrap; background: linear-gradient(90deg, #fbd69c, #fcd08a 70%, #fde3bb); box-shadow: 0 0 2px #fde2b8; }
.b1 { left: 388px; top: 202px; width: 31px; }
.b2 { left: 469px; top: 257px; width: 29px; }
.b3 { left: 508px; top: 312px; width: 191px; }
.b5 { left: 788px; top: 422px; width: 80px; background: linear-gradient(#f9e3c4, #f7d9a8); }
.b6 { left: 1227px; top: 696px; width: 151px; background: linear-gradient(90deg, #f3d294, #eec36f 60%, #f5dcae); }
.diamond { position: absolute; left: 790px; top: 367px; width: 27px; height: 32px; background: #fbd08a; clip-path: polygon(50% 0, 100% 50%, 50% 100%, 0 50%); }
.barlabel { position: absolute; left: 796px; top: 376px; font-size: 10.500px; color: #333; white-space: nowrap; }
.links { position: absolute; left: 0; top: 0; width: 1898px; height: 730px; pointer-events: none; }
.vscroll { flex: 1; background: #f5f5f5; position: relative; }
.upa { position: absolute; left: 5px; top: -17px; font-size: 9px; color: #555; }
.thumb { position: absolute; left: 7px; top: 0; width: 9px; height: 28px; border-radius: 5px; background: #6e6e6e; }

/* banner */
.banner { flex: 1; background: #7030a0; color: #fff; font-family: "Liberation Serif", serif; font-weight: 700; font-size: 40px; line-height: 49px; padding: 9px 0 0 15px; white-space: nowrap; position: relative; z-index: 1; }

/* dialog */
.dialog { position: absolute; left: 851px; top: 256px; width: 1017px; height: 662px; background: #fff; box-shadow: 0 0 28px rgba(0,0,0,.32); display: flex; flex-direction: column; font-size: 12px; color: #2a2a2a; }
.dtitle { height: 29px; flex: none; display: flex; align-items: center; padding-left: 9px; gap: 6px; font-size: 13px; position: relative; margin-bottom: 1px; }
.dti { width: 15px; height: 15px; }
.dctl { position: absolute; left: 897px; top: 9px; display: flex; gap: 33px; }
.dc { width: 12px; height: 12px; }
.dbar { height: 61px; flex: none; display: flex; border-bottom: 1px solid #a8b4c0; background: linear-gradient(100deg, rgba(255,255,255,.6), rgba(255,255,255,.1) 45%, rgba(255,255,255,0) 70%), linear-gradient(#c8e0fb, #a9cdf5); padding-top: 6px; position: relative; }
.tb { display: flex; flex-direction: column; align-items: center; height: 49px; font-size: 12px; white-space: nowrap; flex: none; }
.tbi { width: 34px; height: 28px; margin-bottom: 5px; flex: none; }
.tb-prev { width: 60px; }
.tb-next { width: 62px; margin-left: 5px; }
.tbsep { width: 1px; height: 49px; background: #b5c9de; margin: 0 2px 0 0; flex: none; }
.tb-dep { width: 120px; background: #b9daea; }
.tb-save { width: 60px; margin-left: auto; }
.tb-close { width: 80px; margin-right: 5px; }
.dbody { flex: 1; display: flex; min-height: 0; }
.form { width: 549px; flex: none; display: grid; grid-template-columns: 72px 100px 100px 55px 176px; grid-template-rows: 22px 22px 22px 22px 22px 22px 22px 22px 22px 22px 1fr; gap: 5px; padding: 12px 11px 12px 15px; }
.f-span { grid-column: span 4; }
.f-span2 { grid-column: span 2; }
.fl { display: flex; align-items: center; padding-top: 1px; }
.fl-top { align-items: flex-start; padding-top: 5px; }
.ms { display: flex; align-items: center; gap: 6px; margin-top: -1px; }
.cb { width: 14px; height: 14px; border: 1px solid #707070; background: #fff; margin-left: 1px; }
.inp { border: 1px solid #abadb3; background: #fff; display: flex; align-items: center; padding: 1px 3px 0; position: relative; white-space: nowrap; }
.inp-dis { color: #8a8a8a; border-color: #d9d9d9; }
.inp-sel { background: #f0f0f0; border-color: #e3e3e3; padding-left: 6px; }
.inp-dark { background: #ececec; border-color: #acacac; }
.dd { position: absolute; right: 6px; top: 7px; }
.dd-dis { border-color: #b8b8b8; }
.resrow { display: flex; gap: 5px; }
.inp-grow { flex: 1; }
.btn { background: #dddddd; border: 1px solid #8e8e8e; display: flex; align-items: center; justify-content: center; white-space: nowrap; color: #2a2a2a; }
.btn-res { width: 56px; flex: none; font-size: 10px; }
.colt { display: flex; align-items: center; padding: 1px 0 0 3px; }
.inp-date { padding-left: 5px; }
.inp-lock { color: #b4b4b4; border-color: #d0d0d0; }
.cal { position: absolute; right: 4px; top: 1px; width: 18px; height: 18px; }
.cal-dis { opacity: .4; }
.inp-area { align-items: flex-start; }
.dright { flex: 1; display: flex; flex-direction: column; border-left: 7px solid #f5f5f5; }
.dep { padding-left: 9px; }
.dep-a { height: 272px; border-bottom: 1px solid #f0f0f0; padding-top: 13px; }
.dep-b { flex: 1; padding-top: 14px; }
.dep-t { margin: 0; height: 22px; line-height: 22px; padding-left: 6px; white-space: nowrap; font-size: 11.600px; }
.dep-btns { display: flex; gap: 10px; margin-top: 4px; }
.dep-b .dep-btns { margin-top: 5px; }
.btn-dep { width: 145px; height: 22px; }
.dg { background: #efefef; border: 1px solid #d4d4d4; border-right: 0; margin-top: 8px; }
.dg-a { height: 196px; }
.dg-b { height: 193px; margin-top: 9px; }
.dg-row { display: grid; grid-template-columns: 25px 184px 184px 1fr; height: 25px; background: #fff; border-bottom: 1px solid #d4d4d4; align-items: center; }
.dg-row > span { height: 100%; display: flex; align-items: center; padding-left: 3px; border-right: 1px solid #d4d4d4; white-space: nowrap; }
.dg-row > span:last-child { border-right: 0; }
.dg-head { height: 39px; background: linear-gradient(#fff 35%, #eef0f1); }
.dg-head > span { padding: 3px 0 0 5px; }
.ind { background: #efefef; border-right: 1px solid #d4d4d4; }
.dg-row:not(.dg-head) .ind { background: linear-gradient(90deg, #fff, #eee); }
.nm { font-weight: 400; width: 25px; flex: none; }
.dstatus { height: 21px; flex: none; background: #f1f0ee; padding-left: 14px; line-height: 21px; font-size: 12px; }

/* annotations */
.arrows { position: absolute; left: 0; top: 0; width: 1920px; height: 1080px; pointer-events: none; }
.callout { position: absolute; background: #7030a0; border: 3px solid #5c3d0a; border-radius: 61px; color: #fff; font-size: 27.300px; line-height: 34px; display: flex; align-items: center; white-space: nowrap; }
.co1 { left: 125px; top: 702px; width: 629px; height: 121px; padding-left: 43px; }
.co2 { left: 788px; top: 738px; width: 629px; height: 122px; padding-left: 43px; }
```
